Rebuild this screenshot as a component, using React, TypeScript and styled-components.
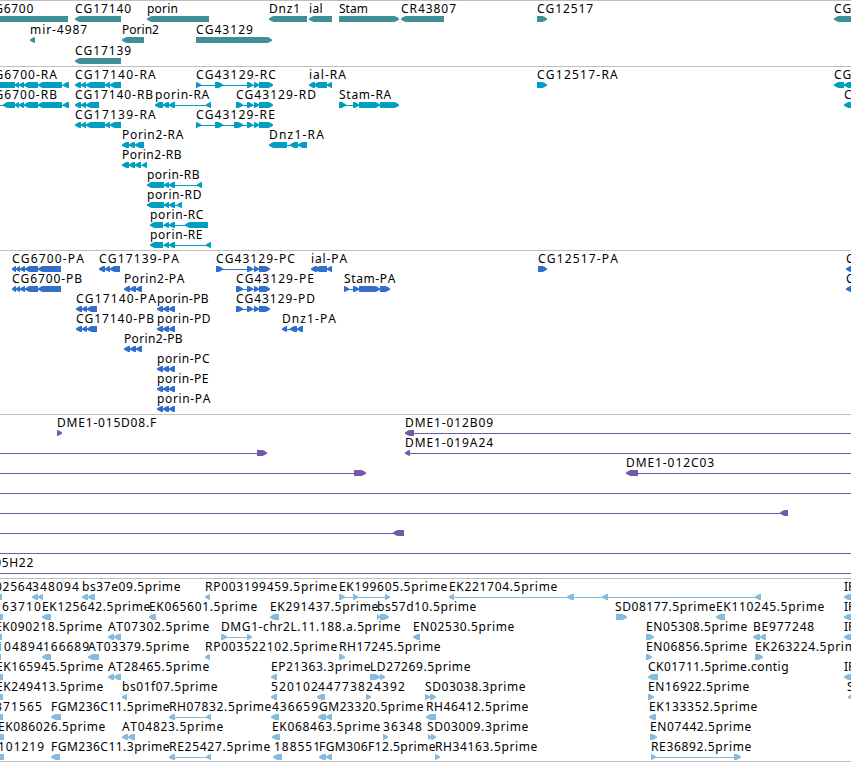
import React, { useLayoutEffect, useRef } from "react";
import styled, { createGlobalStyle } from "styled-components";

type Block = [number, number];

interface Feature {
  name?: string;
  // left and right edge of the label
  text?: Block;
  dir: "L" | "R";
  blocks: Block[];
  // intron line, when it runs further than the blocks
  line?: Block;
}

interface TrackData {
  id: string;
  color: string;
  rowHeight: number;
  gap: number;
  rows: Feature[][];
}

const left = (name: string, x: number, end: number, ...blocks: Block[]): Feature => ({
  name,
  text: [x, end],
  dir: "L",
  blocks,
});

const right = (name: string, x: number, end: number, ...blocks: Block[]): Feature => ({
  name,
  text: [x, end],
  dir: "R",
  blocks,
});

const span = (start: number, end: number, dir: "L" | "R" = "R", ...blocks: Block[]): Feature => ({
  dir,
  blocks,
  line: [start, end],
});

const cg17140: Block[] = [[75, 81], [81, 86], [86, 105], [105, 110], [110, 121]];
const cg6700p: Block[] = [[12, 16], [16, 20], [20, 25], [25, 38], [38, 61]];
const cg43129p: Block[] = [[236, 243], [247, 253], [254, 259], [259, 270]];
const cg17140p: Block[] = [[76, 82], [82, 87], [87, 97]];
const porin2p: Block[] = [[124, 130], [130, 136], [136, 142]];
const porinp: Block[] = [[157, 163], [163, 169], [169, 175]];

const tracks: TrackData[] = [
  {
    id: "gene",
    color: "#3f8f96",
    rowHeight: 21,
    gap: 2,
    rows: [
      [
        left("CG6700", -14, 33, [-40, 68]),
        left("CG17140", 75, 131, [75, 121]),
        left("porin", 147, 177, [147, 209]),
        left("Dnz1", 269, 300, [269, 307]),
        left("ial", 309, 322, [309, 332]),
        right("Stam", 339, 367, [339, 399]),
        left("CR43807", 401, 456, [401, 444]),
        right("CG12517", 537, 593, [537, 547]),
        left("CG", 834, 851, [834, 900]),
      ],
      [
        left("mir-4987", 30, 87, [30, 35]),
        left("Porin2", 122, 158, [122, 144]),
        right("CG43129", 196, 253, [196, 272]),
      ],
      [left("CG17139", 75, 131, [75, 121])],
    ],
  },
  {
    id: "transcript",
    color: "#009fc2",
    rowHeight: 20,
    gap: 3,
    rows: [
      [
        left("CG6700-RA", -14, 57, [-20, 15], [15, 19], [19, 24], [24, 38], [38, 62], [63, 69]),
        left("CG17140-RA", 75, 156, ...cg17140),
        right("CG43129-RC", 196, 276, [196, 201], [215, 223], [247, 253], [254, 259], [259, 273]),
        left("ial-RA", 309, 346, [309, 315], [314, 327], [327, 332]),
        right("CG12517-RA", 537, 618, [537, 547]),
        left("CG", 834, 851, [834, 844], [844, 900]),
      ],
      [
        left("CG6700-RB", -14, 57, [-20, -10], [3, 15], [15, 19], [19, 24], [24, 38], [38, 62], [63, 69]),
        left("CG17140-RB", 75, 153, [75, 81], [81, 86], [86, 99]),
        left("porin-RA", 155, 209, [155, 163], [163, 169], [169, 175], [206, 211]),
        right("CG43129-RD", 236, 316, [236, 243], [247, 253], [254, 259], [259, 273]),
        right("Stam-RA", 339, 391, [339, 346], [353, 359], [359, 380], [380, 399]),
        left("C", 844, 852, [844, 900]),
      ],
      [
        left("CG17139-RA", 75, 156, ...cg17140),
        right("CG43129-RE", 196, 275, [196, 201], [215, 223], [234, 243], [247, 253], [254, 259], [259, 273]),
      ],
      [
        left("Porin2-RA", 122, 183, [122, 129], [129, 135], [135, 144]),
        left("Dnz1-RA", 269, 324, [269, 287], [290, 298], [298, 307]),
      ],
      [left("Porin2-RB", 122, 181, [122, 129], [129, 135], [135, 141], [142, 147])],
      [left("porin-RB", 147, 199, [147, 164], [164, 169], [169, 175], [197, 202])],
      [left("porin-RD", 147, 201, [147, 164], [164, 169], [169, 175], [177, 182])],
      [left("porin-RC", 150, 203, [150, 163], [164, 169], [169, 175], [185, 208])],
      [left("porin-RE", 150, 202, [150, 163], [164, 169], [169, 175], [206, 211])],
    ],
  },
  {
    id: "protein",
    color: "#316fcd",
    rowHeight: 20,
    gap: 3,
    rows: [
      [
        left("CG6700-PA", 12, 84, ...cg6700p),
        left("CG17139-PA", 99, 179, [99, 105], [105, 110], [110, 120]),
        right("CG43129-PC", 216, 295, [216, 223], [247, 253], [254, 259], [259, 270]),
        left("ial-PA", 311, 347, [311, 317], [315, 327], [327, 332]),
        right("CG12517-PA", 538, 618, [538, 547]),
        left("C", 846, 854, [846, 900]),
      ],
      [
        left("CG6700-PB", 12, 82, ...cg6700p),
        left("Porin2-PA", 124, 184, ...porin2p),
        right("CG43129-PE", 236, 314, ...cg43129p),
        right("Stam-PA", 344, 395, [344, 349], [353, 359], [359, 380], [380, 390]),
        left("C", 846, 854, [846, 900]),
      ],
      [
        left("CG17140-PA", 76, 156, ...cg17140p),
        left("porin-PB", 157, 208, ...porinp),
        right("CG43129-PD", 236, 315, ...cg43129p),
      ],
      [
        left("CG17140-PB", 76, 154, ...cg17140p),
        left("porin-PD", 157, 210, ...porinp),
        left("Dnz1-PA", 282, 336, [282, 287], [290, 297], [297, 303]),
      ],
      [left("Porin2-PB", 124, 182, ...porin2p)],
      [left("porin-PC", 157, 209, ...porinp)],
      [left("porin-PE", 157, 208, ...porinp)],
      [left("porin-PA", 157, 210, ...porinp)],
    ],
  },
  {
    id: "clone",
    color: "#7559a9",
    rowHeight: 20,
    gap: 3,
    rows: [
      [
        right("DME1-015D08.F", 57, 156, [57, 62]),
        { ...left("DME1-012B09", 405, 493, [405, 414]), line: [405, 860] },
      ],
      [
        span(-10, 267, "R", [257, 267]),
        { ...left("DME1-019A24", 405, 493, [405, 410]), line: [405, 860] },
      ],
      [
        span(-10, 366, "R", [354, 366]),
        { ...left("DME1-012C03", 626, 714, [626, 638]), line: [626, 860] },
      ],
      [span(-10, 860)],
      [span(-10, 788, "L", [780, 788])],
      [span(-10, 404, "L", [393, 404])],
      [span(-10, 860)],
      [{ ...left("DME1-005H22", -54, 33), line: [-10, 860] }],
    ],
  },
  {
    id: "est",
    color: "#87bbdd",
    rowHeight: 20,
    gap: 2,
    rows: [
      [
        left("02564", -5, 32, [-8, 2]),
        left("348094", 32, 79, [32, 38], [38, 43]),
        left("bs37e09.5prime", 82, 180, [82, 88], [88, 95]),
        left("RP003199459.5prime", 205, 337, [205, 210]),
        right("EK199605.5prime", 339, 447, [339, 345], [353, 358], [385, 390]),
        left("EK221704.5prime", 449, 557, [449, 454], [567, 574], [602, 608], [755, 761]),
        left("IP", 844, 854, [844, 900]),
      ],
      [
        left("63710", 2, 41, [-8, 3]),
        left("EK125642.5prime", 42, 150, [42, 51]),
        left("EK065601.5prime", 149, 257, [149, 156]),
        left("EK291437.5prime", 270, 378, [270, 279]),
        right("bs57d10.5prime", 377, 476, [377, 380], [380, 389]),
        right("SD08177.5prime", 615, 715, [616, 627]),
        left("EK110245.5prime", 716, 824, [716, 725]),
        left("IP", 844, 854, [844, 900]),
      ],
      [
        left("EK090218.5prime", -5, 102, [-8, 2]),
        left("AT07302.5prime", 108, 209, [108, 114], [114, 121]),
        right("DMG1-chr2L.11.188.a.5prime", 221, 400, [221, 227], [247, 252]),
        left("EN02530.5prime", 413, 514, [413, 420]),
        right("EN05308.5prime", 646, 747, [646, 654]),
        left("BE977248", 753, 814, [753, 760], [760, 766]),
        left("IP", 844, 854, [844, 900]),
      ],
      [
        left("104894", -4, 43, [-8, 1]),
        left("166689", 43, 89, [42, 51]),
        left("AT03379.5prime", 88, 189, [88, 99]),
        left("RP003522102.5prime", 205, 337, [205, 210]),
        right("RH17245.5prime", 339, 440, [339, 345]),
        right("EN06856.5prime", 646, 747, [646, 652]),
        right("EK263224.5prime", 755, 863, [755, 763]),
      ],
      [
        left("EK165945.5prime", -4, 103, [-8, 3]),
        left("AT28465.5prime", 108, 209, [108, 114], [114, 121]),
        left("EP21363.3prime", 271, 370, [271, 277]),
        right("LD27269.5prime", 370, 470, [370, 380], [380, 385]),
        left("CK01711.5prime.contig", 648, 788, [648, 658]),
        left("IP", 844, 854, [844, 900]),
      ],
      [
        left("EK249413.5prime", -4, 103, [-8, 3]),
        left("bs01f07.5prime", 122, 217, [122, 127]),
        left("520102", 271, 318, [271, 277]),
        left("447738", 318, 365, [317, 325]),
        right("24392", 366, 405, [366, 371]),
        right("SD03038.3prime", 425, 525, [425, 430], [430, 436]),
        right("EN16922.5prime", 648, 749, [648, 654]),
        left("S", 847, 855, [848, 900]),
      ],
      [
        left("371565", -5, 42, [-8, 3]),
        left("FGM236C11.5prime", 51, 169, [51, 61]),
        left("RH07832.5prime", 169, 271, [169, 175], [206, 211]),
        left("436659", 272, 318, [271, 279]),
        left("GM23320.5prime", 319, 423, [318, 326], [326, 332]),
        left("RH46412.5prime", 426, 528, [426, 436]),
        left("EK133352.5prime", 649, 757, [649, 656]),
      ],
      [
        left("EK086026.5prime", -2, 105, [-8, 4]),
        left("AT04823.5prime", 122, 223, [122, 128], [128, 135]),
        left("EK068463.5prime", 272, 380, [272, 280]),
        right("36348", 383, 422, [383, 388]),
        right("SD03009.3prime", 427, 528, [428, 431], [431, 436]),
        right("EN07442.5prime", 650, 751, [650, 657]),
      ],
      [
        left("101219", -2, 44, [-8, 4]),
        left("FGM236C11.3prime", 51, 169, [51, 60]),
        left("RE25427.5prime", 169, 270, [169, 175], [206, 211]),
        left("188551", 274, 320, [273, 282]),
        left("FGM306F12.5prime", 319, 435, [319, 326], [326, 332]),
        right("RH34163.5prime", 435, 537, [435, 440]),
        right("RE36892.5prime", 651, 751, [651, 656], [734, 741]),
      ],
    ],
  },
];

const TIP = 5;

// block with a slightly rounded point on the side it is transcribed to
function arrow([start, end]: Block, dir: "L" | "R", x0: number) {
  const a = start - x0;
  const b = end - x0;
  const tip = Math.min(TIP, b - a);
  const from = dir === "L" ? a : b;
  const to = dir === "L" ? b : a;
  const d = dir === "L" ? 1 : -1;
  const mid = from + d * tip * 0.45;
  const neck = from + d * tip * 0.9;
  return `${from},2.5 ${mid},1 ${neck},0 ${to},0 ${to},6 ${neck},6 ${mid},5 ${from},3.7`;
}

// spreads the letters so that the name ends at its right edge
function FeatureLabel({ name, x, end }: { name: string; x: number; end: number }) {
  const ref = useRef<HTMLSpanElement>(null);

  useLayoutEffect(() => {
    const el = ref.current;
    if (!el || name.length < 2) return;
    el.style.letterSpacing = "0px";
    const natural = el.getBoundingClientRect().width;
    el.style.letterSpacing = `${(end - x + 1 - natural) / name.length}px`;
  }, [name, x, end]);

  return (
    <Label ref={ref} style={{ left: x }}>
      {name}
    </Label>
  );
}

function FeatureGlyph({ feature, color }: { feature: Feature; color: string }) {
  const { blocks, dir, line } = feature;
  const start = line ? line[0] : blocks[0][0];
  const end = line ? line[1] : blocks[blocks.length - 1][1];

  return (
    <Glyph style={{ left: start }} width={end - start} height={6} fill={color}>
      {(line || blocks.length > 1) && <rect x={1} y={3} width={end - start - 2} height={1} />}
      {blocks.map((block, i) => (
        <polygon key={i} points={arrow(block, dir, start)} />
      ))}
    </Glyph>
  );
}

function App() {
  return (
    <>
      <GlobalStyle />
      <Browser>
        {tracks.map((track) => (
          <Track key={track.id} $gap={track.gap}>
            {track.rows.map((row, i) => (
              <Row key={i} $height={track.rowHeight}>
                {row.map((feature, j) => (
                  <React.Fragment key={j}>
                    <FeatureGlyph feature={feature} color={track.color} />
                    {feature.name && feature.text && (
                      <FeatureLabel name={feature.name} x={feature.text[0]} end={feature.text[1]} />
                    )}
                  </React.Fragment>
                ))}
              </Row>
            ))}
          </Track>
        ))}
      </Browser>
    </>
  );
}

const GlobalStyle = createGlobalStyle`
  body {
    margin: 0;
    background: #fff;
    overflow: hidden;
  }
`;

const Browser = styled.main`
  display: flex;
  flex-direction: column;
  width: 851px;
  height: 762px;
  box-sizing: border-box;
  overflow: hidden;
  border-bottom: 1px solid #bebebe;
`;

const Track = styled.section<{ $gap: number }>`
  display: flex;
  flex-direction: column;
  padding-bottom: ${(p) => p.$gap}px;
  border-top: 1px solid #bebebe;
`;

const Row = styled.div<{ $height: number }>`
  position: relative;
  height: ${(p) => p.$height}px;
`;

const Label = styled.span`
  position: absolute;
  top: 0;
  font-family: "Noto Sans", "Open Sans", sans-serif;
  font-size: 12px;
  line-height: 16px;
  color: #000;
  white-space: nowrap;
  font-kerning: none;
`;

const Glyph = styled.svg`
  position: absolute;
  top: 15px;
  display: block;
`;

export default App;
